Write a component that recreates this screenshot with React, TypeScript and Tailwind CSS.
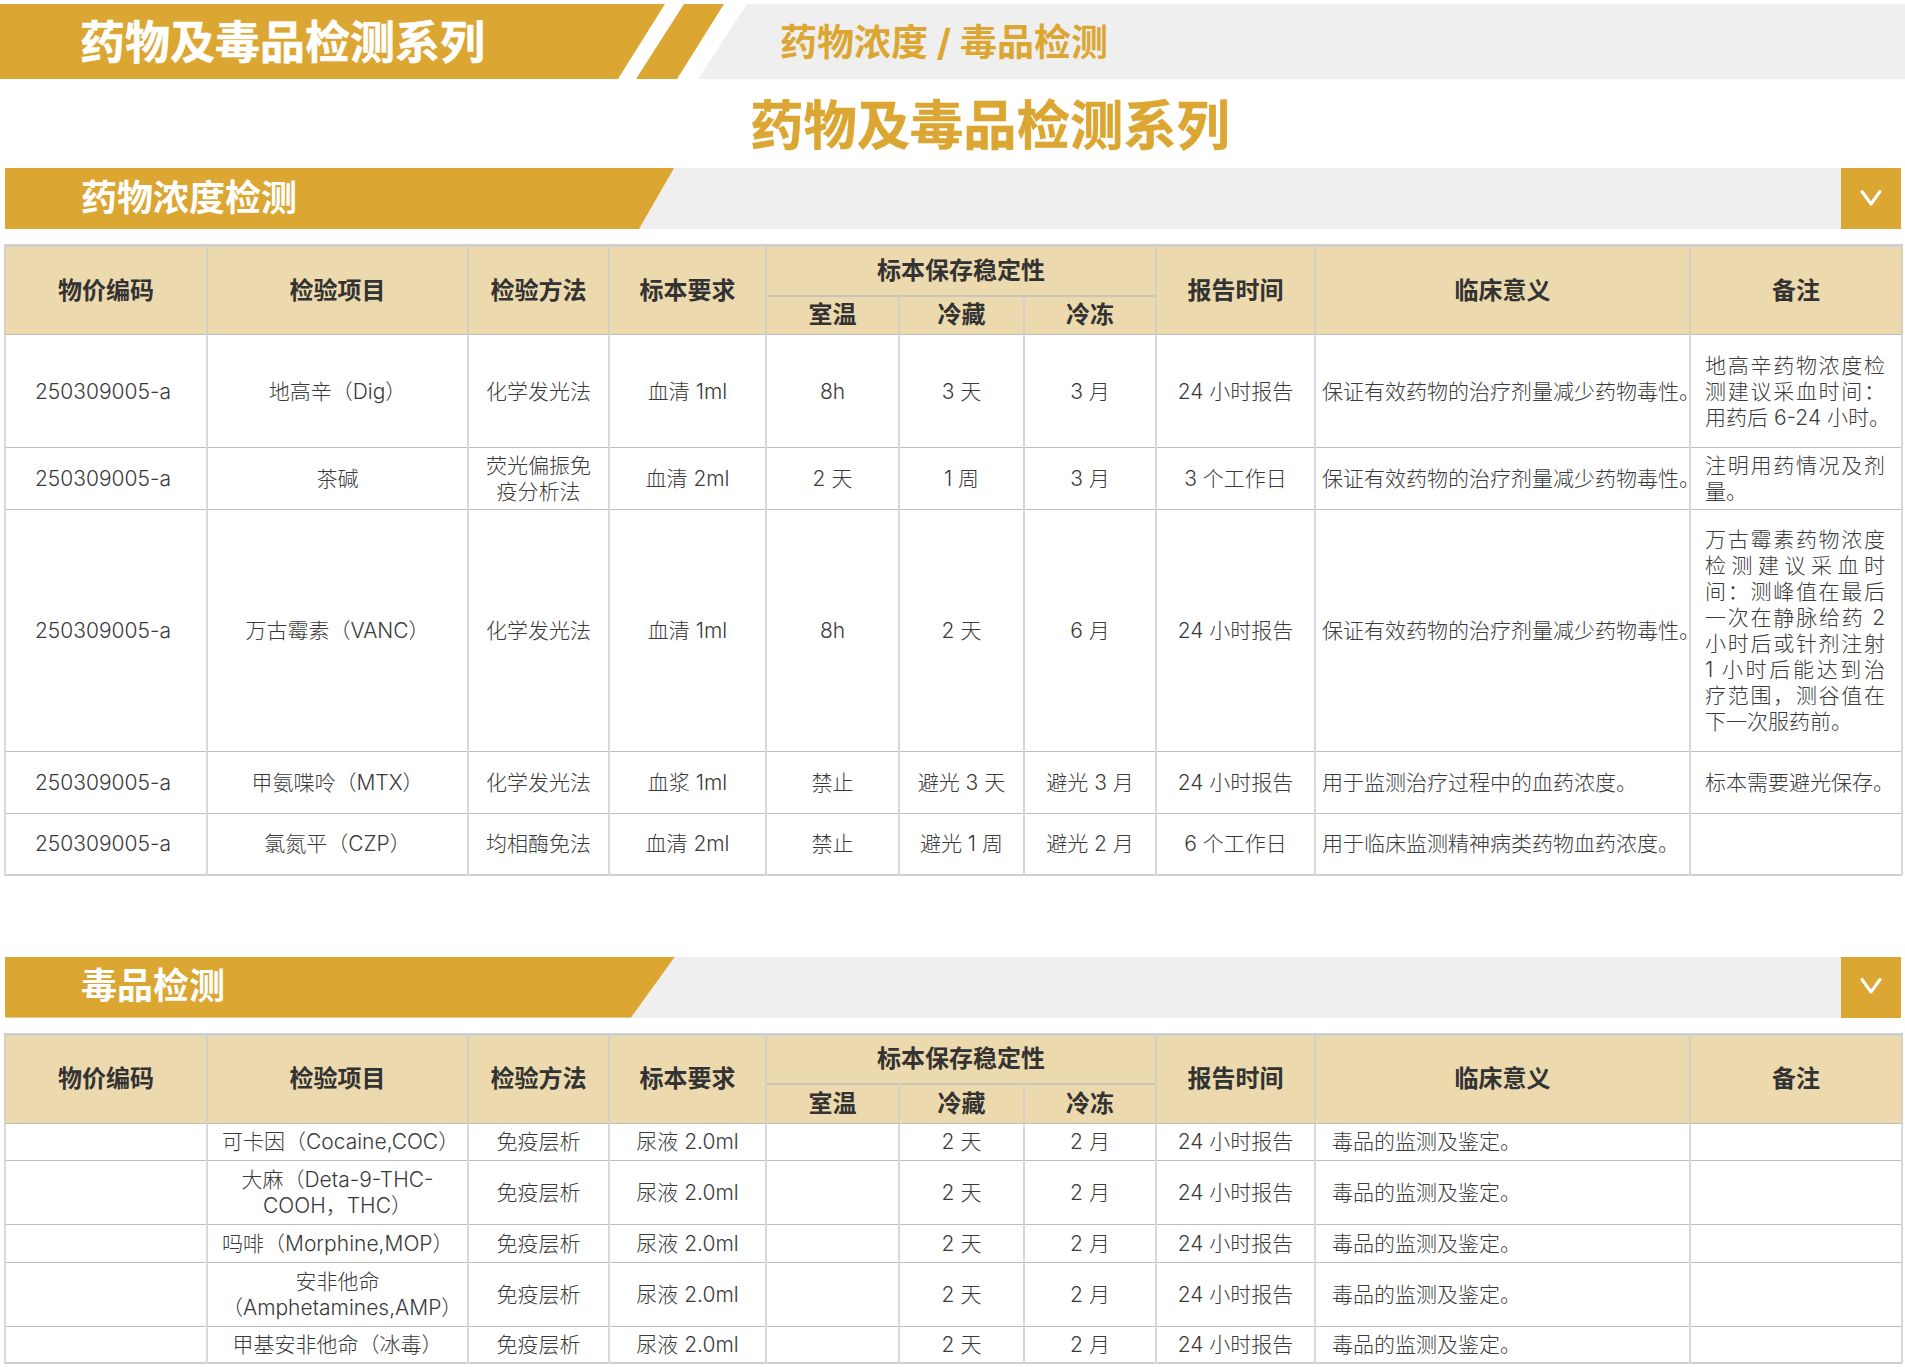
const fontStack = "font-['Inter','Noto_Sans_CJK_SC',sans-serif]";

const colWidths = [
	"w-[202px]",
	"w-[261px]",
	"w-[141px]",
	"w-[157px]",
	"w-[133px]",
	"w-[125px]",
	"w-[132px]",
	"w-[159px]",
	"w-[375px]",
	"w-[212px]",
];

interface DrugRow {
	height: string;
	code: string;
	item: string;
	method: string;
	sample: string;
	room: string;
	fridge: string;
	frozen: string;
	report: string;
	meaning: string;
	note: string[];
}

const drugRows: DrugRow[] = [
	{
		height: "h-[113px]",
		code: "250309005-a",
		item: "地高辛（Dig）",
		method: "化学发光法",
		sample: "血清 1ml",
		room: "8h",
		fridge: "3 天",
		frozen: "3 月",
		report: "24 小时报告",
		meaning: "保证有效药物的治疗剂量减少药物毒性。",
		note: ["地高辛药物浓度检", "测建议采血时间：", "用药后 6-24 小时。"],
	},
	{
		height: "h-[62px]",
		code: "250309005-a",
		item: "茶碱",
		method: "荧光偏振免疫分析法",
		sample: "血清 2ml",
		room: "2 天",
		fridge: "1 周",
		frozen: "3 月",
		report: "3 个工作日",
		meaning: "保证有效药物的治疗剂量减少药物毒性。",
		note: ["注明用药情况及剂", "量。"],
	},
	{
		height: "h-[242px]",
		code: "250309005-a",
		item: "万古霉素（VANC）",
		method: "化学发光法",
		sample: "血清 1ml",
		room: "8h",
		fridge: "2 天",
		frozen: "6 月",
		report: "24 小时报告",
		meaning: "保证有效药物的治疗剂量减少药物毒性。",
		note: [
			"万古霉素药物浓度",
			"检测建议采血时",
			"间：测峰值在最后",
			"一次在静脉给药 2",
			"小时后或针剂注射",
			"1 小时后能达到治",
			"疗范围，测谷值在",
			"下一次服药前。",
		],
	},
	{
		height: "h-[62px]",
		code: "250309005-a",
		item: "甲氨喋呤（MTX）",
		method: "化学发光法",
		sample: "血浆 1ml",
		room: "禁止",
		fridge: "避光 3 天",
		frozen: "避光 3 月",
		report: "24 小时报告",
		meaning: "用于监测治疗过程中的血药浓度。",
		note: ["标本需要避光保存。"],
	},
	{
		height: "h-[61px]",
		code: "250309005-a",
		item: "氯氮平（CZP）",
		method: "均相酶免法",
		sample: "血清 2ml",
		room: "禁止",
		fridge: "避光 1 周",
		frozen: "避光 2 月",
		report: "6 个工作日",
		meaning: "用于临床监测精神病类药物血药浓度。",
		note: [],
	},
];

const toxinRows: { height: string; item: string }[] = [
	{ height: "h-[37px]", item: "可卡因（Cocaine,COC）" },
	{ height: "h-[64px]", item: "大麻（Deta-9-THC-COOH，THC）" },
	{ height: "h-[38px]", item: "吗啡（Morphine,MOP）" },
	{ height: "h-[64px]", item: "安非他命（Amphetamines,AMP）" },
	{ height: "h-[37px]", item: "甲基安非他命（冰毒）" },
];

const headCell =
	"border-x-2 border-x-[#d4d0c4] border-t-[3px] border-t-[#cfcfcf] bg-[#ecd9ad] p-0 text-center align-middle text-[24px] font-bold text-[#333]";
const subCell =
	"border-x-2 border-x-[#d4d0c4] border-t-2 border-t-[#c9c5b8] bg-[#ecd9ad] p-0 text-center align-middle text-[24px] font-bold text-[#333]";
const cell =
	"border-x-2 border-x-[#d8d8d8] border-y border-y-[#bdbdbd] p-0 px-[6px] pt-[1px] text-center align-middle text-[21px] font-light leading-[26px] text-[#3a3a3a]";

function TableHead() {
	return (
		<>
			<colgroup>
				{colWidths.map((w) => (
					<col key={w} className={w} />
				))}
			</colgroup>
			<thead>
				<tr className="h-[50px]">
					<th rowSpan={2} className={headCell}>物价编码</th>
					<th rowSpan={2} className={headCell}>检验项目</th>
					<th rowSpan={2} className={headCell}>检验方法</th>
					<th rowSpan={2} className={headCell}>标本要求</th>
					<th colSpan={3} className={headCell}>标本保存稳定性</th>
					<th rowSpan={2} className={headCell}>报告时间</th>
					<th rowSpan={2} className={headCell}>临床意义</th>
					<th rowSpan={2} className={headCell}>备注</th>
				</tr>
				<tr className="h-[39px]">
					<th className={subCell}>室温</th>
					<th className={subCell}>冷藏</th>
					<th className={subCell}>冷冻</th>
				</tr>
			</thead>
		</>
	);
}

function SectionBar({ title, goldClass }: { title: string; goldClass: string }) {
	return (
		<div className="mx-[5px] flex h-[61px] w-[1896px] items-stretch justify-between bg-[#efefef]">
			<div
				className={`flex items-center pb-[2px] pl-[76px] text-[36px] font-bold text-white ${goldClass}`}
			>
				{title}
			</div>
			<div className="flex w-[60px] items-center justify-center bg-[#dca633] pb-[2px]">
				<svg width="24" height="18" viewBox="0 0 24 18" fill="none">
					<path
						d="M3 2.5 L12 15 L21 2.5"
						stroke="white"
						strokeWidth="3"
						strokeLinecap="round"
						strokeLinejoin="round"
					/>
				</svg>
			</div>
		</div>
	);
}

export default function App() {
	return (
		<div lang="zh-CN" className={`h-[1367px] w-[1905px] overflow-hidden bg-white pt-[4px] ${fontStack}`}>
			{/* Top banner */}
			<div className="flex h-[75px]">
				<div className="flex w-[665px] shrink-0 items-center bg-[#dca633] pl-[80px] pt-[3px] text-[45px] font-bold text-white [-webkit-text-stroke:0.5px] [clip-path:polygon(0_0,100%_0,618px_100%,0_100%)]">
					药物及毒品检测系列
				</div>
				<div className="ml-[-29px] w-[88px] shrink-0 bg-[#dca633] [clip-path:polygon(48px_0,100%_0,41px_100%,0_100%)]" />
				<div className="ml-[-26px] flex flex-1 items-center bg-[#efefef] pl-[82px] pt-[2px] text-[37px] font-bold text-[#dca633] [clip-path:polygon(49px_0,100%_0,100%_100%,0_100%)]">
					药物浓度 / 毒品检测
				</div>
			</div>

			<div className="flex h-[89px] items-center justify-center pl-[75px] pt-[4px] text-[53.3px] font-bold text-[#dca633] [-webkit-text-stroke:0.5px]">
				药物及毒品检测系列
			</div>

			<SectionBar
				title="药物浓度检测"
				goldClass="w-[669px] [clip-path:polygon(0_0,100%_0,634px_100%,0_100%)] bg-[#dca633]"
			/>

			<table className="ml-[4px] mt-[15px] w-[1897px] table-fixed border-collapse border-b-2 border-b-[#cfcfcf]">
				<TableHead />
				<tbody>
					{drugRows.map((r) => (
						<tr key={r.item} className={r.height}>
							<td className={`${cell} pr-[12px]`}>{r.code}</td>
							<td className={cell}>{r.item}</td>
							<td className={`${cell} px-[16px]`}>{r.method}</td>
							<td className={cell}>{r.sample}</td>
							<td className={cell}>{r.room}</td>
							<td className={cell}>{r.fridge}</td>
							<td className={cell}>{r.frozen}</td>
							<td className={cell}>{r.report}</td>
							<td className={`${cell} whitespace-nowrap text-left`}>{r.meaning}</td>
							<td className={`${cell} pl-[14px] pr-[16px]`}>
								{r.note.map((line, i) => (
									<div
										key={line}
										className={
											i < r.note.length - 1
												? "text-justify [text-align-last:justify]"
												: "whitespace-nowrap text-left"
										}
									>
										{line}
									</div>
								))}
							</td>
						</tr>
					))}
				</tbody>
			</table>

			<div className="h-[81px]" />

			<SectionBar
				title="毒品检测"
				goldClass="w-[670px] [clip-path:polygon(0_0,100%_0,626px_100%,0_100%)] bg-[#dca633]"
			/>

			<table className="ml-[4px] mt-[15px] w-[1897px] table-fixed border-collapse border-b-2 border-b-[#cfcfcf]">
				<TableHead />
				<tbody>
					{toxinRows.map((r) => (
						<tr key={r.item} className={r.height}>
							<td className={cell} />
							<td className={`${cell} px-[14px]`}>{r.item}</td>
							<td className={cell}>免疫层析</td>
							<td className={cell}>尿液 2.0ml</td>
							<td className={cell} />
							<td className={cell}>2 天</td>
							<td className={cell}>2 月</td>
							<td className={cell}>24 小时报告</td>
							<td className={`${cell} pl-[16px] text-left`}>毒品的监测及鉴定。</td>
							<td className={cell} />
						</tr>
					))}
				</tbody>
			</table>
		</div>
	);
}
